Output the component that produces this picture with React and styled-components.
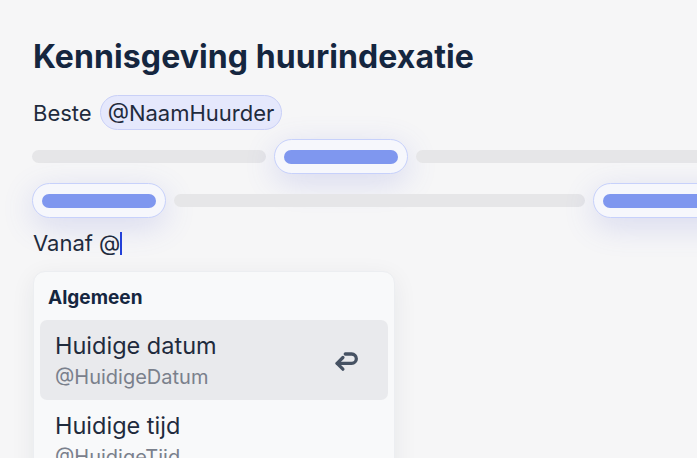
import React from 'react';
import styled, { createGlobalStyle } from 'styled-components';

const Global = createGlobalStyle`
  html, body {
    margin: 0;
    padding: 0;
    background: #f6f6f7;
    overflow: hidden;
  }
  body {
    font-family: Inter, "Noto Sans", sans-serif;
    color: #1e293b;
  }
`;

const Page = styled.div`
  width: 697px;
  height: 458px;
  overflow: hidden;
  padding: 38px 0 0 33px;
  box-sizing: border-box;
`;

const Title = styled.h1`
  margin: 0;
  font-size: 32px;
  line-height: 38px;
  font-weight: 700;
  color: #15263f;
  letter-spacing: 0.1px;
`;

const Line = styled.div`
  display: flex;
  align-items: center;
  gap: 8px;
  margin-top: ${p => p.$top || 0}px;
  font-size: 22px;
  line-height: 28px;
  color: #1f2b3d;
  white-space: nowrap;
`;

const Chip = styled.span`
  display: inline-flex;
  align-items: center;
  height: 35px;
  padding: 0 7px;
  box-sizing: border-box;
  border-radius: 18px;
  background: #e5e8fc;
  border: 1px solid #c9d0f7;
  color: #1f2b3d;
`;

const Skeleton = styled.div`
  display: flex;
  align-items: center;
  gap: 8px;
  margin-top: ${p => p.$top || 0}px;
  margin-left: -1px;
  width: 1200px;
`;

const Bar = styled.div`
  flex: none;
  width: ${p => p.$w}px;
  height: 13px;
  border-radius: 7px;
  background: #e6e6e8;
`;

const Pill = styled.div`
  flex: none;
  width: ${p => p.$w || 134}px;
  height: 35px;
  box-sizing: border-box;
  padding: 0 9px;
  display: flex;
  align-items: center;
  border-radius: 18px;
  background: #f6f7fc;
  border: 1.5px solid #c7d1fb;
  box-shadow: 0 8px 32px rgba(90, 100, 210, 0.2);
`;

const PillFill = styled.div`
  flex: 1;
  height: 14px;
  border-radius: 7px;
  background: #7f97ef;
`;

const Caret = styled.span`
  display: inline-block;
  vertical-align: -4px;
  width: 1.5px;
  height: 23px;
  margin-left: 0;
  background: #2340d8;
`;

const Menu = styled.div`
  width: 362px;
  margin-top: 14px;
  box-sizing: border-box;
  padding: 14px 6px 0;
  background: #f8f9fa;
  border: 1px solid #eceef1;
  border-radius: 12px;
  box-shadow: 0 6px 24px rgba(30, 41, 59, 0.07);
  height: 230px;
`;

const GroupLabel = styled.div`
  padding: 0 8px;
  font-size: 19px;
  line-height: 24px;
  font-weight: 700;
  color: #15263f;
  margin-bottom: 10px;
`;

const Item = styled.div`
  display: flex;
  align-items: center;
  height: 80px;
  box-sizing: border-box;
  padding: 1px 27px 0 15px;
  border-radius: 7px;
  background: ${p => (p.$active ? '#e9eaed' : 'transparent')};
`;

const ItemText = styled.div`
  flex: 1;
  display: flex;
  flex-direction: column;
  gap: 5px;
`;

const ItemName = styled.div`
  font-size: 23.5px;
  line-height: 28px;
  color: #1f2b3d;
`;

const ItemTag = styled.div`
  font-size: 20px;
  line-height: 24px;
  color: #7a808c;
`;

const EnterIcon = () => (
  <svg width="28" height="28" viewBox="0 0 24 24" fill="none" stroke="#465263"
    strokeWidth="2.8" strokeLinecap="round" strokeLinejoin="round">
    <path d="M8.5 9 3.5 14l5 5" />
    <path d="M3.5 14H16a4 4 0 0 0 0-8h-5.5" />
  </svg>
);

export default function App() {
  return (
    <>
      <Global />
      <Page>
        <Title>Kennisgeving huurindexatie</Title>
        <Line $top={19}>
          Beste<Chip>@NaamHuurder</Chip>
        </Line>
        <Skeleton $top={9}>
          <Bar $w={234} />
          <Pill $w={134}>
            <PillFill />
          </Pill>
          <Bar $w={440} />
        </Skeleton>
        <Skeleton $top={9}>
          <Pill $w={134}>
            <PillFill />
          </Pill>
          <Bar $w={411} />
          <Pill $w={200}>
            <PillFill />
          </Pill>
        </Skeleton>
        <Line $top={11}>
          <span>Vanaf @<Caret /></span>
        </Line>
        <Menu>
          <GroupLabel>Algemeen</GroupLabel>
          <Item $active>
            <ItemText>
              <ItemName>Huidige datum</ItemName>
              <ItemTag>@HuidigeDatum</ItemTag>
            </ItemText>
            <EnterIcon />
          </Item>
          <Item>
            <ItemText>
              <ItemName>Huidige tijd</ItemName>
              <ItemTag>@HuidigeTijd</ItemTag>
            </ItemText>
          </Item>
        </Menu>
      </Page>
    </>
  );
}
